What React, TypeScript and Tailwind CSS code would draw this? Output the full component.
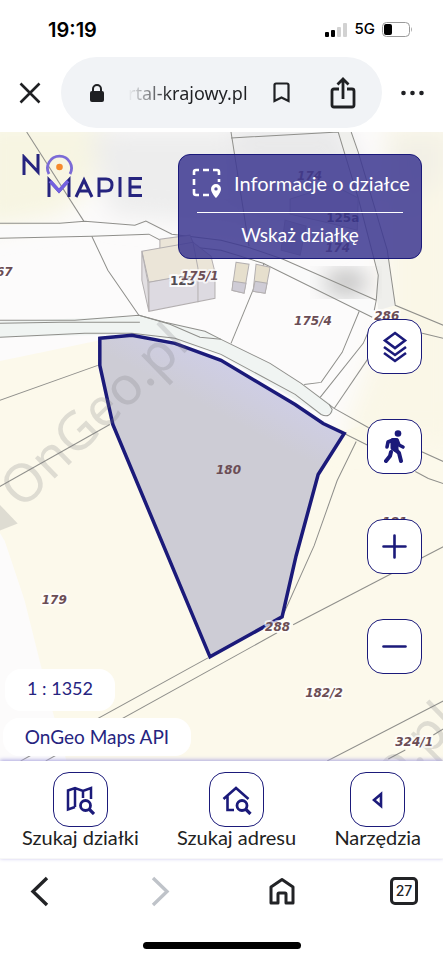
import type { ReactNode } from "react";

const plotLines = [
  "27,132 84,221",
  "0,223 60,223 85,221 135,225 146,221 172,234 221,240 248,247 283,259 376,300",
  "0,238 92,236 149,234 168,244 221,250 263,263 372,317",
  "92,236 108,270 139,315",
  "0,320 75,320 139,315 165,322 205,331 221,339 270,363 301,383 334,408 368,427",
  "0,323 60,322 140,322",
  "139,315 170,324 200,337 221,339",
  "0,337 85,333 132,333 175,338 221,354",
  "264,263 231,343",
  "231,132 249,246",
  "231,138 338,132 358,198 378,275 376,300 374,310",
  "351,132 358,152 387,250 395,305 443,325",
  "359,311 342,352 321,382 304,384",
  "370,327 363,343 320,397",
  "368,358 334,408",
  "344,433 368,445",
  "368,427 443,461",
  "415,471 428,478 443,483",
  "356,441 337,480 314,545 284,612",
  "400,325 422,333 443,338",
  "0,400 98,365",
  "0,486 110,424",
  "21,760 208,657",
  "46,760 277,632",
  "293,624 443,546",
  "327,760 443,700",
  "388,758 405,749",
  "433,734 443,728",
];

const plotLabels = [
  { x: -12, y: 276, text: "167" },
  { x: 181, y: 280, text: "175/1" },
  { x: 294, y: 325, text: "175/4" },
  { x: 374, y: 320, text: "286" },
  { x: 382, y: 525, text: "181" },
  { x: 216, y: 473, text: "180" },
  { x: 42, y: 603, text: "179" },
  { x: 265, y: 630, text: "288" },
  { x: 305, y: 696, text: "182/2" },
  { x: 395, y: 745, text: "324/1" },
  { x: 297, y: 180, text: "174" },
  { x: 325, y: 252, text: "174" },
];

function PlotMap() {
  return (
    <svg
      className="absolute inset-0 h-full w-full"
      viewBox="0 132 443 628"
      preserveAspectRatio="xMidYMid slice"
      role="img"
      aria-label="Mapa działek"
    >
      <defs>
        <filter id="soft" x="-30%" y="-30%" width="160%" height="160%">
          <feGaussianBlur stdDeviation="12" />
        </filter>
        <linearGradient id="plot" gradientUnits="userSpaceOnUse" x1="245" y1="372" x2="222" y2="415">
          <stop offset="0" stopColor="#cfcee6" />
          <stop offset="1" stopColor="#cdccd5" />
        </linearGradient>
      </defs>
      <rect y="132" width="443" height="628" fill="#fcfbfb" />
      <path
        d="M-20 365 100 340 345 430 443 400V790H75L50 700 25 600 5 540-20 500Z"
        fill="#fcf9eb"
      />
      <g filter="url(#soft)">
        <path d="M-20 120H110L90 190 60 215-20 230Z" fill="#f7f5e2" />
        <path d="M90 130H240V225L110 215Z" fill="#ededed" />
        <path d="M235 120H340L370 190 330 240 240 225Z" fill="#e9e9ea" />
        <path d="M385 120H460V440H340L385 320Z" fill="#faf7e7" />
        <path d="M385 140 443 130V180L400 210Z" fill="#f2f0e6" />
      </g>
      <path d="M338 132H351L387 250 395 305 378 310 376 290 378 275 358 198Z" fill="#efefec" />
      <path d="M0 225 146 223 172 236 283 260 376 302 372 316 263 262 168 243 149 234 0 237Z" fill="#fafafa" />
      <path
        d="M0 321 139 316 205 331 270 363 330 403 333 412 322 415 221 355 175 340 132 334 0 337Z"
        fill="#f0f4f2"
      />
      <g filter="url(#soft)">
        <ellipse cx="346" cy="282" rx="22" ry="10" fill="#a9a9a8" />
      </g>
      <g fill="none" stroke="#8f8f8b" strokeWidth="1">
        {plotLines.map((points) => (
          <polyline key={points} points={points} />
        ))}
        <path d="M221 354 295 394 321 414Q330 418 332 409L329 404" />
      </g>
      <g stroke="#b3afb0" strokeWidth="1">
        <path d="M160 250V239L190 235 197 252Z" fill="#ebe5d8" />
        <path d="M142 251 193 242 211 256 215 272 149 282Z" fill="#ebe5d8" />
        <path d="M149 282 215 270V298L149 311Z" fill="#dddae1" />
        <path d="M142 251 148 282 149 311 142 280Z" fill="#e2dfe2" />
        <path d="M193 242 198 268V302" fill="none" />
        <path d="M236 262 249 264 244 293 232 290Z" fill="#e6dfcd" />
        <path d="M233 281 246 283 244 293 232 290Z" fill="#cfccd6" />
        <path d="M256 264 270 267 265 293 253 291Z" fill="#e6dfcd" />
        <path d="M255 281 267 283 265 293 253 291Z" fill="#cfccd6" />
        <path d="M290 199 333 185 358 198 357 230 330 223 290 214Z" fill="#dbd8dc" />
        <path d="M285 220 306 226 300 255 281 250Z" fill="#cbc8d0" />
      </g>
      <polygon
        points="100,338 132,335 175,343 221,360 295,404 323,423 344,433 318,474 296,555 282,616 210,656 113,424 100,365"
        fill="url(#plot)"
        stroke="#1b1a7a"
        strokeWidth="3.5"
      />
      <g fill="#777779" fillOpacity="0.22" fontFamily="'Noto Sans'" fontSize="53">
        <text transform="translate(22 510) rotate(-44)">OnGeo.pl</text>
        <text transform="translate(291 888) rotate(-44)">OnGeo.pl</text>
        <path d="M0 504 18 523 0 530Z" />
      </g>
      <g fontFamily="'DejaVu Sans'" fontSize="12" fontWeight="700" stroke="#ffffff" paintOrder="stroke">
        <text x="170" y="285" fill="#514b50" strokeWidth="4" strokeOpacity="0.85">
          125
        </text>
        <text x="326" y="222" fill="#39343f" strokeWidth="1" strokeOpacity="0.4">
          125a
        </text>
      </g>
      <g
        fontFamily="'DejaVu Sans'"
        fontSize="12"
        fontWeight="700"
        fontStyle="italic"
        fill="#6b4d55"
        stroke="#ffffff"
        strokeOpacity="0.7"
        strokeWidth="4"
        strokeLinejoin="round"
        paintOrder="stroke"
      >
        {plotLabels.map((l) => (
          <text key={`${l.text}-${l.y}`} x={l.x} y={l.y} strokeWidth={l.text === "180" || l.text === "174" ? 0 : 4}>
            {l.text}
          </text>
        ))}
      </g>
    </svg>
  );
}

function Logo() {
  return (
    <svg className="h-[48px] w-[122px]" viewBox="21 154 122 48" role="img" aria-label="Na mapie">
      <g fill="none" stroke="#26247f" strokeWidth="3">
        <path d="M24 175V157L38 172V154" />
        <path d="M49 197V180L59 191 69 180V197" />
        <path d="M76 197 84 180 92 197M79 191H89" />
        <path d="M99 197V179H106Q112 179 112 185T106 191H99" />
        <path d="M120 177V197" />
        <path d="M142 178.500H130V195.500H142M130 187H141" />
      </g>
      <path d="M49 174A12 12 0 1 1 70 174" fill="none" stroke="#7b6bd6" strokeWidth="2.800" />
      <path d="M50 181 59 191 68 181" fill="none" stroke="#7462e0" strokeWidth="3.400" />
      <circle cx="59.500" cy="167" r="3.300" fill="#f58a2c" />
    </svg>
  );
}

function SquareButton({ label, children }: { label: string; children: ReactNode }) {
  return (
    <button
      type="button"
      aria-label={label}
      className="flex size-[55px] shrink-0 items-center justify-center rounded-2xl border border-[#1b1a7a] bg-white text-[#1b1a7a]"
    >
      {children}
    </button>
  );
}

function ToolButton({ label, children }: { label: string; children: ReactNode }) {
  return (
    <button type="button" className="flex flex-col items-center text-[#222]">
      <span className="flex size-[55px] items-center justify-center rounded-2xl border border-[#1b1a7a] text-[#1b1a7a]">
        {children}
      </span>
      <span className="text-xl leading-5 whitespace-nowrap">{label}</span>
    </button>
  );
}

function StatusBar() {
  return (
    <div className="flex h-[57px] items-center justify-between pt-[2px] pr-[30px] pl-12 font-['Inter',sans-serif] text-black">
      <span className="text-xl leading-6 font-semibold">19:19</span>
      <div className="flex items-center gap-[7px]">
        <svg className="h-[14px] w-[23px]" viewBox="0 0 23 14" aria-hidden="true">
          <rect y="9" width="4" height="5" rx="1" />
          <rect x="6" y="7" width="4" height="7" rx="1" />
          <rect x="12" y="4" width="4" height="10" rx="1" fill="#d2d2d2" />
          <rect x="18" width="4" height="14" rx="1" fill="#d2d2d2" />
        </svg>
        <span className="text-[15px] font-medium">5G</span>
        <svg className="h-[15px] w-[31px]" viewBox="0 0 31 15" aria-hidden="true">
          <rect x="0.500" y="0.500" width="27" height="14" rx="4" fill="none" stroke="#9a9a9a" />
          <rect x="2" y="2" width="8" height="11" rx="2" />
          <path d="M29 5Q31 7.500 29 10Z" fill="#aaa" />
        </svg>
      </div>
    </div>
  );
}

function AddressBar() {
  return (
    <div className="flex h-[75px] items-start px-[19px] text-[#1f2023]">
      <button type="button" aria-label="Zamknij" className="mt-[25px]">
        <svg className="size-[22px]" viewBox="0 0 22 22" fill="none" stroke="currentColor" strokeWidth="2.600">
          <path d="M1.500 1.500 20.500 20.500M20.500 1.500 1.500 20.500" />
        </svg>
      </button>
      <div className="ml-5 flex h-[71px] flex-1 items-center rounded-full bg-[#f1f3f6] pr-[26px] pl-[29px]">
        <svg className="h-[18px] w-[14px]" viewBox="0 0 14 18" aria-hidden="true">
          <rect y="7" width="14" height="11" rx="2" fill="currentColor" />
          <path d="M3 8V5a4 4 0 0 1 8 0v3" fill="none" stroke="currentColor" strokeWidth="2" />
        </svg>
        <span className="ml-[24px] flex-1 bg-linear-to-r from-[#f1f3f6] via-[#1f2023] via-30% to-[#1f2023] bg-clip-text font-['Noto_Sans',sans-serif] text-lg whitespace-nowrap text-transparent">
          rtal-krajowy.pl
        </span>
        <button type="button" aria-label="Zakładka">
          <svg className="h-[21px] w-[17px]" viewBox="0 0 17 21" fill="none" stroke="currentColor" strokeWidth="2.200">
            <path d="M1.500 3Q1.500 1.500 3 1.500H14Q15.500 1.500 15.500 3V19L8.500 15.500 1.500 19Z" />
          </svg>
        </button>
        <button type="button" aria-label="Udostępnij" className="ml-10">
          <svg className="h-[32px] w-[26px]" viewBox="0 0 26 32" fill="none" stroke="currentColor" strokeWidth="2.800">
            <path d="M9 12H4Q2 12 2 14V28Q2 30 4 30H22Q24 30 24 28V14Q24 12 22 12H17" />
            <path d="M13 22V3M7.500 7.500 13 2 18.500 7.500" />
          </svg>
        </button>
      </div>
      <button type="button" aria-label="Więcej" className="mt-[33px] ml-[19px]">
        <svg className="h-[6px] w-[23px]" viewBox="0 0 23 6" fill="currentColor">
          <circle cx="2.500" cy="3" r="2.300" />
          <circle cx="11.500" cy="3" r="2.300" />
          <circle cx="20.500" cy="3" r="2.300" />
        </svg>
      </button>
    </div>
  );
}

export default function App() {
  return (
    <div className="flex min-h-screen flex-col bg-white font-['Lato','Noto_Sans',sans-serif]">
      <header>
        <StatusBar />
        <AddressBar />
      </header>

      <main className="relative flex flex-1 flex-col overflow-hidden">
        <PlotMap />
        <div className="relative flex items-start justify-between px-[21px] pt-[22px]">
          <Logo />
          <section className="h-[105px] w-[244px] rounded-xl border border-[#1b1a7a] bg-[#3c3790]/85 px-[13px] pt-3 text-white">
            <div className="flex h-8 items-center gap-[12px]">
              <svg className="size-[30px] shrink-0" viewBox="0 0 30 30" aria-hidden="true">
                <path
                  d="M2 7V4Q2 2 4 2H7M11 2H17M21 2H25Q27 2 27 4V7M27 11V14M2 11V17M2 21V25Q2 27 4 27H7M11 27H17"
                  fill="none"
                  stroke="currentColor"
                  strokeWidth="2.600"
                />
                <path
                  d="M24 16a5 5 0 0 0-5 5c0 4 5 9 5 9s5-5 5-9a5 5 0 0 0-5-5Zm0 3.200a1.700 1.700 0 1 1 0 3.400 1.700 1.700 0 0 1 0-3.400Z"
                  fill="currentColor"
                  fillRule="evenodd"
                />
              </svg>
              <h1 className="text-xl leading-7 whitespace-nowrap">Informacje o działce</h1>
            </div>
            <hr className="mx-[5px] mt-[13px] border-white" />
            <p className="mt-[10px] text-center text-[19px] leading-6">Wskaż działkę</p>
          </section>
        </div>

        <div className="relative mt-[60px] mb-[87px] flex flex-col items-end gap-[45px] pr-[21px]">
          <SquareButton label="Warstwy">
            <svg className="h-[34px] w-[26px]" viewBox="0 0 26 34" fill="none" stroke="currentColor" strokeWidth="2.600">
              <path d="M13 3 23 10.500 13 18 3 10.500Z" />
              <path d="M2 17 13 25 24 17M2 23 13 31 24 23" />
            </svg>
          </SquareButton>
          <SquareButton label="Widok ulicy">
            <svg className="h-[34px] w-[22px]" viewBox="0 0 22 34" fill="none" stroke="currentColor">
              <circle cx="14" cy="3.500" r="3.300" fill="currentColor" stroke="none" />
              <path d="M9 10.500H12L12 20 9 18Z" fill="currentColor" strokeWidth="5" strokeLinejoin="round" />
              <path d="M9 10 4 12 3 17M13 10 15 15 19 17" strokeWidth="3.600" strokeLinecap="round" strokeLinejoin="round" />
              <path d="M10 18 15 23 17 31M7 22 6 26 2 31" strokeWidth="4" strokeLinecap="round" strokeLinejoin="round" />
            </svg>
          </SquareButton>
          <SquareButton label="Przybliż">
            <svg className="size-[25px]" viewBox="0 0 25 25" stroke="currentColor" strokeWidth="2.600" strokeLinecap="round">
              <path d="M12.500 1.500V23.500M1.500 12.500H23.500" />
            </svg>
          </SquareButton>
          <SquareButton label="Oddal">
            <svg className="size-[25px]" viewBox="0 0 25 25" stroke="currentColor" strokeWidth="2.600" strokeLinecap="round">
              <path d="M1.500 12.500H23.500" />
            </svg>
          </SquareButton>
        </div>

        <div className="absolute bottom-[5px] left-[3px] flex flex-col items-start gap-[7px] text-[#26247f]">
          <span className="ml-[2px] flex h-[42px] w-[110px] items-center justify-center rounded-2xl bg-white pb-1 text-lg">
            1 : 1352
          </span>
          <span className="flex h-[38px] w-[188px] items-center justify-center rounded-2xl bg-white text-[19px]">
            OnGeo Maps API
          </span>
        </div>
      </main>

      <nav
        aria-label="Narzędzia mapy"
        className="relative flex h-[98px] items-start justify-between border-b border-[#f7f7f7] bg-white px-[22px] pt-[11px] shadow-[0_-1px_4px_#aaa5df]"
      >
        <ToolButton label="Szukaj działki">
          <svg className="size-[30px]" viewBox="0 0 30 30" fill="none" stroke="currentColor" strokeWidth="2.500">
            <path d="M10 22 3 24.500V5.500L10 3 18 6 26 3V14M10 3V22M18 6V13" />
            <circle cx="20.500" cy="20.500" r="5" strokeWidth="2.800" />
            <path d="M24 24 29 29" strokeWidth="3.200" />
          </svg>
        </ToolButton>
        <ToolButton label="Szukaj adresu">
          <svg className="size-[30px]" viewBox="0 0 30 30" fill="none" stroke="currentColor" strokeWidth="2.600">
            <path d="M1.500 14 14 3 26.500 14M5.500 11V25H12" />
            <circle cx="20" cy="20.500" r="5" strokeWidth="2.800" />
            <path d="M23.500 24 28.500 29" strokeWidth="3.200" />
          </svg>
        </ToolButton>
        <ToolButton label="Narzędzia">
          <svg className="h-[20px] w-[16px]" viewBox="0 0 16 20" fill="none" stroke="currentColor" strokeWidth="2.600">
            <path d="M11 4V16L4 10Z" />
          </svg>
        </ToolButton>
      </nav>

      <footer className="bg-white text-[#222326]">
        <div className="flex h-16 items-center justify-between px-[25px]">
          <button type="button" aria-label="Wstecz" className="flex w-7 justify-center">
            <svg className="h-[31px] w-[19px]" viewBox="0 0 19 31" fill="none" stroke="currentColor" strokeWidth="3.400">
              <path d="M17 2 3 15.500 17 29" />
            </svg>
          </button>
          <button type="button" aria-label="Dalej" className="flex w-7 justify-center text-[#bfc3c9]">
            <svg className="h-[31px] w-[19px]" viewBox="0 0 19 31" fill="none" stroke="currentColor" strokeWidth="3.400">
              <path d="M2 2 16 15.500 2 29" />
            </svg>
          </button>
          <button type="button" aria-label="Strona główna" className="flex w-7 justify-center">
            <svg className="h-[28px] w-[26px]" viewBox="0 0 26 28" fill="none" stroke="currentColor" strokeWidth="3" strokeLinejoin="round">
              <path d="M2 10 13 2.500 24 10V26H17V17Q17 16 16 16H10Q9 16 9 17V26H2Z" />
            </svg>
          </button>
          <button
            type="button"
            aria-label="Karty: 27"
            className="flex size-7 items-center justify-center rounded-[5px] border-3 border-current font-['Inter',sans-serif] text-sm font-medium"
          >
            27
          </button>
        </div>
        <div className="flex h-[38px] items-start justify-center pt-[19px]">
          <span className="h-[7px] w-[158px] rounded-full bg-black" />
        </div>
      </footer>
    </div>
  );
}
